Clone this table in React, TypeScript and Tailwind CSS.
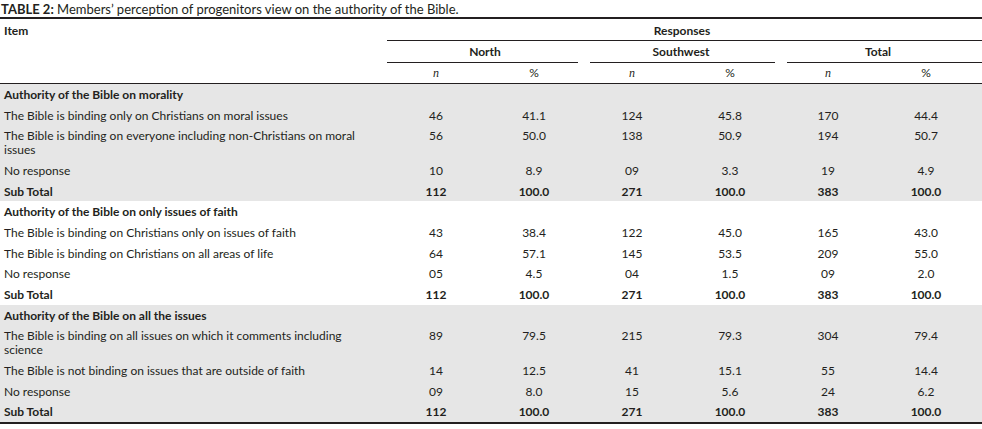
import React from "react"

type Row = {
  label: string
  values?: string[]
  kind: "section" | "item" | "sub"
  tall?: boolean
}

type Block = { shade: boolean; rows: Row[] }

const blocks: Block[] = [
  {
    shade: true,
    rows: [
      { label: "Authority of the Bible on morality", kind: "section" },
      { label: "The Bible is binding only on Christians on moral issues", kind: "item", values: ["46", "41.1", "124", "45.8", "170", "44.4"] },
      { label: "The Bible is binding on everyone including non-Christians on moral issues", kind: "item", tall: true, values: ["56", "50.0", "138", "50.9", "194", "50.7"] },
      { label: "No response", kind: "item", values: ["10", "8.9", "09", "3.3", "19", "4.9"] },
      { label: "Sub Total", kind: "sub", values: ["112", "100.0", "271", "100.0", "383", "100.0"] },
    ],
  },
  {
    shade: false,
    rows: [
      { label: "Authority of the Bible on only issues of faith", kind: "section" },
      { label: "The Bible is binding on Christians only on issues of faith", kind: "item", values: ["43", "38.4", "122", "45.0", "165", "43.0"] },
      { label: "The Bible is binding on Christians on all areas of life", kind: "item", values: ["64", "57.1", "145", "53.5", "209", "55.0"] },
      { label: "No response", kind: "item", values: ["05", "4.5", "04", "1.5", "09", "2.0"] },
      { label: "Sub Total", kind: "sub", values: ["112", "100.0", "271", "100.0", "383", "100.0"] },
    ],
  },
  {
    shade: true,
    rows: [
      { label: "Authority of the Bible on all the issues", kind: "section" },
      { label: "The Bible is binding on all issues on which it comments including science", kind: "item", tall: true, values: ["89", "79.5", "215", "79.3", "304", "79.4"] },
      { label: "The Bible is not binding on issues that are outside of faith", kind: "item", values: ["14", "12.5", "41", "15.1", "55", "14.4"] },
      { label: "No response", kind: "item", values: ["09", "8.0", "15", "5.6", "24", "6.2"] },
      { label: "Sub Total", kind: "sub", values: ["112", "100.0", "271", "100.0", "383", "100.0"] },
    ],
  },
]

const cols = "grid grid-cols-[387px_98px_98px_98px_98px_98px_98px_1fr]"

function BodyRow({ row }: { row: Row }) {
  const bold = row.kind !== "item"
  return (
    <div className={`${cols} ${row.tall ? "h-[34.67px]" : "h-[20.67px]"} pt-[4px] leading-[14px] ${bold ? "font-bold" : ""}`}>
      <div className="pl-[4px] pr-[12px]">{row.label}</div>
      {(row.values ?? []).map((v, i) => (
        <div key={i} className="text-center">{v}</div>
      ))}
    </div>
  )
}

export default function App() {
  return (
    <div className="w-[982px] h-[429px] bg-white text-[#231f20] text-[12px] font-['Lato','Liberation_Sans',sans-serif]">
      <div className="h-[17px] pl-[1px] text-[13px] leading-[18px]">
        <span className="font-bold">TABLE 2:</span> Members’ perception of progenitors view on the authority of the Bible.
      </div>
      <div className="h-[2px] bg-[#231f20]" />

      <div className="grid grid-cols-[387px_1fr] h-[21px] pt-[2px] items-center font-bold">
        <div className="pl-[4px]">Item</div>
        <div className="text-center pr-[5px]">Responses</div>
      </div>
      <div className="grid grid-cols-[387px_1fr]">
        <div />
        <div className="h-px bg-[#231f20]" />
      </div>

      <div className="grid grid-cols-[387px_196px_196px_1fr] h-[21px] items-center font-bold">
        <div />
        <div className="text-center">North</div>
        <div className="text-center">Southwest</div>
        <div className="text-center pr-[5px]">Total</div>
      </div>
      <div className="grid grid-cols-[387px_196px_196px_1fr] h-px">
        <div />
        <div className="mr-[5px] bg-[#231f20]" />
        <div className="ml-[7px] mr-[4px] bg-[#231f20]" />
        <div className="ml-[8px] bg-[#231f20]" />
      </div>

      <div className={`${cols} h-[20px] items-center`}>
        <div />
        {["n", "%", "n", "%", "n", "%"].map((h, i) => (
          <div key={i} className={`text-center ${h === "n" ? "italic font-['Liberation_Serif',serif] text-[12px]" : ""}`}>{h}</div>
        ))}
      </div>
      <div className="h-px bg-[#231f20]" />

      {blocks.map((b, i) => (
        <div key={i} className={b.shade ? "bg-[#e6e6e6]" : "bg-white"}>
          {b.rows.map((r, j) => (
            <BodyRow key={j} row={r} />
          ))}
        </div>
      ))}
      <div className="h-[2px] bg-[#231f20]" />
    </div>
  )
}
